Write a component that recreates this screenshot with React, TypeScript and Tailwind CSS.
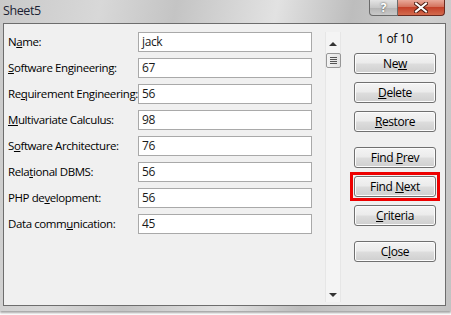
import { ReactNode } from 'react';

const fields: { label: ReactNode; value: string }[] = [
  { label: <>N<u>a</u>me:</>, value: 'jack' },
  { label: <><u>S</u>oftware Engineering:</>, value: '67' },
  { label: <>Re<u>q</u>uirement Engineering:</>, value: '56' },
  { label: <><u>M</u>ultivariate Calculus:</>, value: '98' },
  { label: <>S<u>o</u>ftware Architecture:</>, value: '76' },
  { label: <>Rela<u>t</u>ional DBMS:</>, value: '56' },
  { label: <>PHP de<u>v</u>elopment:</>, value: '56' },
  { label: <>Data comm<u>u</u>nication:</>, value: '45' },
];

function Btn({ children, highlight }: { children: ReactNode; highlight?: boolean }) {
  const btn = (
    <div className="w-[82px] h-[21px] rounded-[3px] border border-[#707070] bg-[linear-gradient(#f4f4f4,#ebebeb_48%,#dddddd_52%,#cfcfcf)] flex items-center justify-center text-[12px] text-black shadow-[inset_0_0_0_1px_#fcfcfc]">
      <span>{children}</span>
    </div>
  );
  if (highlight) {
    return <div className="border-[3px] border-[#ee0000] p-px -mx-[4px] -my-[4px]">{btn}</div>;
  }
  return btn;
}

export default function App() {
  return (
    <div
      className="w-[451px] h-[315px] bg-white overflow-hidden tracking-[-0.4px]"
      style={{ fontFamily: '"Open Sans", "Noto Sans", sans-serif' }}
    >
      <div className="w-[451px] h-[311px] bg-[linear-gradient(100deg,#c9c9c9_0%,#d8d8d8_20%,#c4c4c4_35%,#e2e2e2_55%,#bdbdbd_70%,#cfcfcf_85%,#c2c2c2_100%)] flex flex-col shadow-[0_2px_2px_rgba(0,0,0,0.35)]">
        {/* title bar */}
        <div className="h-[23px] flex items-start relative">
          <div className="pl-[3px] pt-[3px] text-[12.5px] text-[#1b2233] leading-[16px]">Sheet5</div>
          <div className="ml-auto mr-[6px] flex">
            <div className="w-[29px] h-[16px] rounded-bl-[4px] border border-t-0 border-[#6b6b6b] bg-[linear-gradient(#e4e4e4,#c8c8c8_50%,#b4b4b4_51%,#c9c9c9)] flex items-center justify-center text-[12px] leading-none text-white font-bold [text-shadow:0_0_2px_#333]">
              ?
            </div>
            <div className="w-[47px] h-[16px] rounded-br-[4px] border border-l-0 border-t-0 border-[#6b2a20] bg-[linear-gradient(#e9a99a,#d4735e_45%,#c4412a_50%,#d36a4d)] flex items-center justify-center">
              <svg width="14" height="11" viewBox="0 0 14 11">
                <path d="M2 1.5 L12 9.5 M12 1.5 L2 9.5" stroke="#4a1a10" strokeWidth="4" strokeLinecap="square" />
                <path d="M2 1.5 L12 9.5 M12 1.5 L2 9.5" stroke="#ffffff" strokeWidth="2" strokeLinecap="square" />
              </svg>
            </div>
          </div>
        </div>

        {/* client area */}
        <div className="mx-[3px] mr-[5px] h-[283px] border border-[#6d6d6d] bg-[#f0f0f0] flex">
          {/* fields */}
          <div className="w-[320px] flex flex-col pl-[4px] pt-[8px] gap-[6px]">
            {fields.map((f, i) => (
              <div key={i} className="flex items-center h-[20px]">
                <div className="w-[130px] text-[11.5px] text-black whitespace-nowrap">{f.label}</div>
                <div className="w-[174px] h-[20px] border border-[#a9a9a9] bg-white text-[12px] text-[#1a1a1a] pl-[3px] leading-[18px]">
                  {f.value}
                </div>
              </div>
            ))}
          </div>

          {/* scrollbar */}
          <div className="ml-[1px] mt-[8px] mb-[3px] w-[16px] border-l border-r border-[#e6e6e6] bg-[#f4f4f4] flex flex-col items-center">
            <div className="h-[18px] flex items-center justify-center pt-[5px]">
              <div className="w-0 h-0 border-l-[4px] border-r-[4px] border-b-[4px] border-l-transparent border-r-transparent border-b-[#333]" />
            </div>
            <div className="mt-[3px] w-[15px] h-[15px] rounded-[2px] border border-[#979797] bg-[linear-gradient(90deg,#f3f3f3,#e2e2e2)] flex flex-col items-center justify-center gap-[1px]">
              <div className="w-[7px] h-px bg-[#555]" />
              <div className="w-[7px] h-px bg-[#555]" />
              <div className="w-[7px] h-px bg-[#555]" />
              <div className="w-[7px] h-px bg-[#555]" />
            </div>
            <div className="mt-auto h-[14px] flex items-center justify-center">
              <div className="w-0 h-0 border-l-[4px] border-r-[4px] border-t-[4px] border-l-transparent border-r-transparent border-t-[#333]" />
            </div>
          </div>

          {/* buttons */}
          <div className="ml-[13px] w-[82px] flex flex-col pt-[7px]">
            <div className="text-[12px] text-black text-center h-[16px] leading-[16px]">1 of 10</div>
            <div className="mt-[6px] flex flex-col gap-[8px]">
              <Btn>Ne<u>w</u></Btn>
              <Btn><u>D</u>elete</Btn>
              <Btn><u>R</u>estore</Btn>
            </div>
            <div className="mt-[15px] flex flex-col gap-[8px]">
              <Btn>Find <u>P</u>rev</Btn>
              <Btn highlight>Find <u>N</u>ext</Btn>
              <Btn><u>C</u>riteria</Btn>
            </div>
            <div className="mt-[15px]">
              <Btn>C<u>l</u>ose</Btn>
            </div>
          </div>
        </div>
      </div>
    </div>
  );
}
